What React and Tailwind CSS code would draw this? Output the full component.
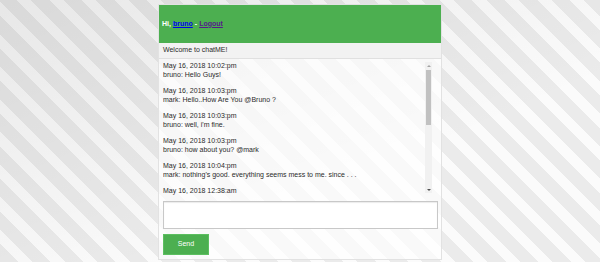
const messages = [
  { time: "May 16, 2018 10:02:pm", text: "bruno: Hello Guys!" },
  { time: "May 16, 2018 10:03:pm", text: "mark: Hello..How Are You @Bruno ?" },
  { time: "May 16, 2018 10:03:pm", text: "bruno: well, i'm fine." },
  { time: "May 16, 2018 10:03:pm", text: "bruno: how about you? @mark" },
  { time: "May 16, 2018 10:04:pm", text: "mark: nothing's good. everything seems mess to me. since . . ." },
  { time: "May 16, 2018 12:38:am" },
];

function ScrollBar() {
  return (
    <div className="w-[7px] h-[131px] mt-[1px] bg-[#f1f1f1] flex flex-col items-center shrink-0">
      <div className="h-[7px] flex items-center justify-center">
        <div className="w-0 h-0 border-x-[2px] border-x-transparent border-b-[2px] border-b-[#a3a3a3]" />
      </div>
      <div className="w-[5px] h-[55px] mt-[1px] bg-[#c1c1c1]" />
      <div className="flex-1" />
      <div className="h-[7px] flex items-center justify-center">
        <div className="w-0 h-0 border-x-[2px] border-x-transparent border-t-[2px] border-t-[#505050]" />
      </div>
    </div>
  );
}

export default function App() {
  return (
    <div className="w-full h-[262px] overflow-hidden pt-[4px] flex justify-center font-['Liberation_Sans',Arial,sans-serif] bg-[image:linear-gradient(to_bottom_right,rgba(0,0,0,0.08),rgba(0,0,0,0)_65%),repeating-linear-gradient(45deg,#ebebeb_0px,#ebebeb_13px,#fbfbfb_13px,#fbfbfb_23px)]">
      <div className="w-[284px] h-[256px] border border-[#e2e2e2] bg-white/70 flex flex-col">
        <div className="h-[38px] bg-[#4caf50] flex items-center pl-[3px] text-[7px] font-bold text-white">
          <span>Hi, </span>
          <a href="#" className="text-[#0000ee] underline mx-[2px]">bruno</a>
          <span> - </span>
          <a href="#" className="text-[#551a8b] underline ml-[2px]">Logout</a>
        </div>

        <div className="h-[16px] bg-[#f2f2f2] border-b border-[#e0e0e0] flex items-center pl-[4px] text-[7px] text-[#2b2b2b]">
          Welcome to chatME!
        </div>

        <div className="h-[136px] flex pt-[2px] pl-[4px] pr-[9px]">
          <div className="flex-1 h-[134px] overflow-hidden text-[7px] leading-[9px] text-[#2b2b2b]">
            {messages.map((m, i) => (
              <div key={i} className="mb-[7px]">
                <div>{m.time}</div>
                {m.text && <div>{m.text}</div>}
              </div>
            ))}
          </div>
          <ScrollBar />
        </div>

        <div className="px-[4px] pt-[6px]">
          <textarea className="block w-[275px] h-[28px] bg-white border border-[#c8c8c8] shadow-[inset_0_1px_1px_rgba(0,0,0,0.08)] resize-none outline-none" />
          <button className="mt-[4px] w-[46px] h-[21px] bg-[#4caf50] border border-[#5cbf60] text-white text-[7px]">
            Send
          </button>
        </div>
      </div>
    </div>
  );
}
